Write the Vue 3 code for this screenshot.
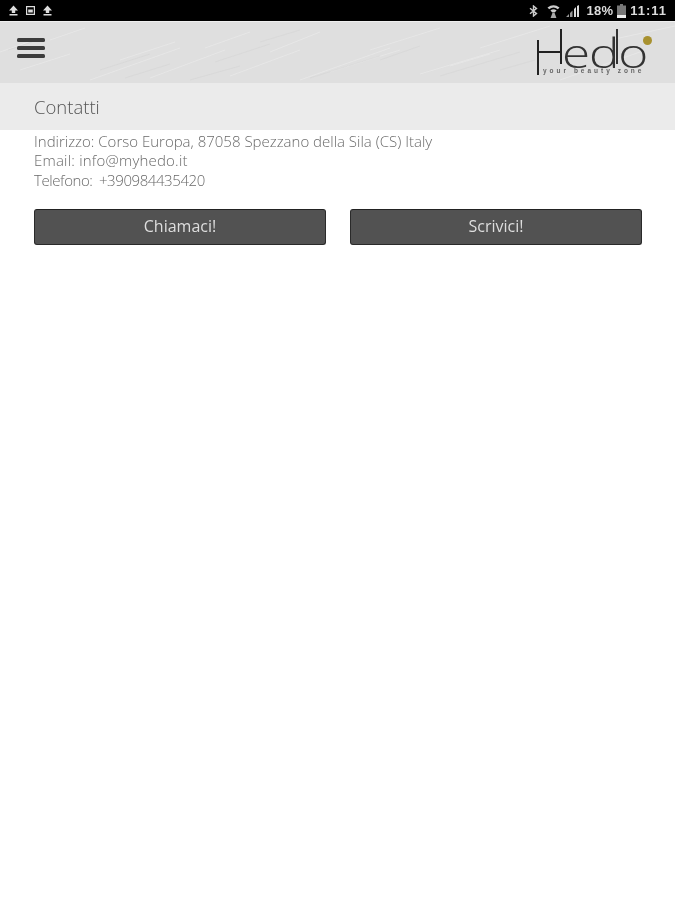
<script setup>
const lines = [
  { text: 'Indirizzo: Corso Europa, 87058 Spezzano della Sila (CS) Italy', cls: 'line-address' },
  { text: 'Email: info@myhedo.it', cls: 'line-email' },
  { text: 'Telefono: +390984435420', cls: 'line-phone' }
]
const lightStreaks = [
  'M50 40 L85 28', 'M0 52 L40 38', 'M90 80 L180 48', 'M150 78 L225 50', 'M230 76 L300 50',
  'M300 80 L390 48', 'M370 50 L440 28', 'M420 74 L500 50', 'M480 48 L550 26', 'M20 70 L70 54',
  'M120 60 L175 42', 'M205 48 L250 32', 'M560 80 L640 52', 'M610 40 L675 26', 'M270 52 L320 32',
  'M330 72 L400 50', 'M450 66 L490 54'
]
const darkStreaks = [
  'M215 62 L270 44', 'M310 78 L380 56', 'M380 60 L420 46', 'M190 80 L240 66', 'M100 70 L150 54',
  'M440 76 L520 52', 'M500 70 L535 60', 'M8 50 L32 42', 'M260 42 L300 30', 'M125 78 L170 64'
]
</script>

<template>
  <div class="page">
    <div class="status">
      <div class="status-left">
        <svg width="11" height="11" viewBox="0 0 11 11"><path d="M5.5 0.5 L10 5.5 H7.2 V8 H3.8 V5.5 H1 Z M1.5 9 H9.5 V10.5 H1.5 Z" fill="#ddd"/></svg>
        <svg width="11" height="11" viewBox="0 0 11 11"><path d="M1 1 H10 V10 H1 Z M2.2 2.2 V8.8 H8.8 V2.2 Z M3.2 4.6 H7.8 V7.6 H3.2 Z" fill="#ddd" fill-rule="evenodd"/></svg>
        <svg width="11" height="11" viewBox="0 0 11 11"><path d="M5.5 0.5 L10 5.5 H7.2 V8 H3.8 V5.5 H1 Z M1.5 9 H9.5 V10.5 H1.5 Z" fill="#ddd"/></svg>
      </div>
      <div class="status-right">
        <svg width="9" height="12" viewBox="0 0 9 12"><path d="M1 3.2 L7.5 8.6 L4.5 11 V1 L7.5 3.4 L1 8.8" fill="none" stroke="#ccc" stroke-width="1.4"/></svg>
        <svg class="wifi" width="13" height="14" viewBox="0 0 13 14"><path d="M0.5 3.5 Q6.5 -1 12.5 3.5 L10.8 5.2 Q6.5 2 2.2 5.2 Z M3.4 6.4 Q6.5 4 9.6 6.4 L7.6 8.6 H5.4 Z" fill="#ccc"/><path d="M5.4 9 H7.6 L9.4 14 H3.6 Z" fill="#aaa"/></svg>
        <svg class="signal" width="15" height="12" viewBox="0 0 15 12"><path d="M1 12 L4 9 V12 Z M5 12 V8 L7.5 5.5 V12 Z" fill="#999"/><path d="M9 12 V4 L11 2 V12 Z M12 12 V1 L14 0 V12 Z" fill="#ddd"/></svg>
        <span class="pct">18%</span>
        <svg width="9" height="14" viewBox="0 0 9 14"><path d="M3 0 H6 V1.4 H9 V14 H0 V1.4 H3 Z" fill="#777"/><rect y="11" width="9" height="3" fill="#eee"/></svg>
        <span class="time">11:11</span>
      </div>
    </div>

    <header class="topbar">
      <svg class="texture" width="675" height="60" viewBox="0 22 675 60">
        <path v-for="(d, i) in lightStreaks" :key="'l' + i" :d="d" stroke="#ececec" stroke-width="1" fill="none" opacity="0.55"/>
        <path v-for="(d, i) in darkStreaks" :key="'d' + i" :d="d" stroke="#d0d0d0" stroke-width="1" fill="none" opacity="0.4"/>
      </svg>
      <div class="burger"><span></span><span></span><span></span></div>
      <div class="logo" aria-label="Hedo">
        <i class="stem stem-left"></i>
        <i class="stem stem-right"></i>
        <i class="stem-cross"></i>
        <i class="stem stem-d"></i>
        <span class="logo-rest">edo</span>
        <i class="logo-dot"></i>
        <div class="logo-tag">your beauty zone</div>
      </div>
    </header>

    <div class="title-band">Contatti</div>

    <div class="info">
      <div v-for="l in lines" :key="l.text" :class="l.cls">{{ l.text }}</div>
    </div>

    <div class="actions">
      <button class="btn">Chiamaci!</button>
      <button class="btn">Scrivici!</button>
    </div>
  </div>
</template>

<style>
html, body { margin: 0; background: #fff; }
</style>

<style scoped>
.page {
  width: 675px;
  height: 900px;
  background: #fff;
  font-family: "Open Sans", "Noto Sans", sans-serif;
  overflow: hidden;
  filter: blur(0.4px);
}
.status {
  height: 21px;
  background: #000;
  display: flex;
  align-items: center;
  justify-content: space-between;
  padding: 0 8px;
  box-sizing: border-box;
}
.status-left { display: flex; gap: 6px; align-items: center; }
.status-right { display: flex; align-items: center; gap: 4px; color: #ddd; font: 700 13px "Liberation Sans", sans-serif; }
.status-right .pct { letter-spacing: 0.2px; margin-left: 3px; }
.status-right .time { letter-spacing: 1px; }
.wifi { margin-left: 5px; }
.signal { margin-left: 1px; }
.topbar {
  position: relative;
  height: 61px;
  background: #dfdfdf;
  border-top: 1px solid #efefef;
  display: flex;
  align-items: flex-start;
  justify-content: space-between;
  overflow: hidden;
}
.texture { position: absolute; left: 0; top: 0; filter: blur(0.5px); }
.burger {
  position: relative;
  margin: 16px 0 0 17px;
  width: 28px;
  display: flex;
  flex-direction: column;
  gap: 4px;
}
.burger span {
  display: block;
  height: 4px;
  border-radius: 1.5px;
  background: #3c3c3c;
}
.logo {
  position: relative;
  width: 118px;
  height: 60px;
  margin-right: 20px;
}
.stem {
  position: absolute;
  width: 2px;
  background: #222;
}
.stem-left { left: 0; top: 18px; height: 35px; }
.stem-right { left: 23px; top: 7px; height: 35px; }
.stem-cross {
  position: absolute;
  left: 0;
  top: 29px;
  width: 25px;
  height: 2px;
  background: #222;
}
.stem-d { left: 79px; top: 7px; height: 35px; width: 1.5px; background: #333; }
.logo-rest {
  position: absolute;
  left: 25px;
  top: 15px;
  font-size: 41px;
  line-height: 30px;
  font-weight: 300;
  letter-spacing: -1px;
  color: #333;
  transform: scaleX(1.25);
  transform-origin: left top;
}
.logo-dot {
  position: absolute;
  left: 106px;
  top: 14px;
  width: 9px;
  height: 9px;
  border-radius: 50%;
  background: #a8912f;
}
.logo-tag {
  position: absolute;
  left: 6px;
  top: 45px;
  font: 700 6.5px/8px "Liberation Sans", sans-serif;
  letter-spacing: 3px;
  color: #666;
  white-space: nowrap;
}
.title-band {
  height: 47px;
  background: #ebebeb;
  padding-left: 34px;
  box-sizing: border-box;
  line-height: 47px;
  font-size: 18.5px;
  font-weight: 300;
  color: #555;
}
.info {
  padding: 1.6px 0 0 34px;
  font-size: 15px;
  line-height: 19.5px;
  font-weight: 300;
  color: #6a6a6a;
}
.line-email { letter-spacing: 0.2px; }
.line-phone { letter-spacing: -0.42px; word-spacing: 3px; }
.actions {
  display: flex;
  gap: 24px;
  padding: 18.9px 0 0 34px;
}
.btn {
  width: 292px;
  height: 36px;
  background: #525252;
  border: 1px solid #2a2a2a;
  border-top-color: #222;
  border-radius: 3px;
  box-sizing: border-box;
  color: #dedede;
  font-family: inherit;
  font-size: 16px;
  font-weight: 400;
  line-height: 30px;
  padding: 0 0 2px;
}
</style>
